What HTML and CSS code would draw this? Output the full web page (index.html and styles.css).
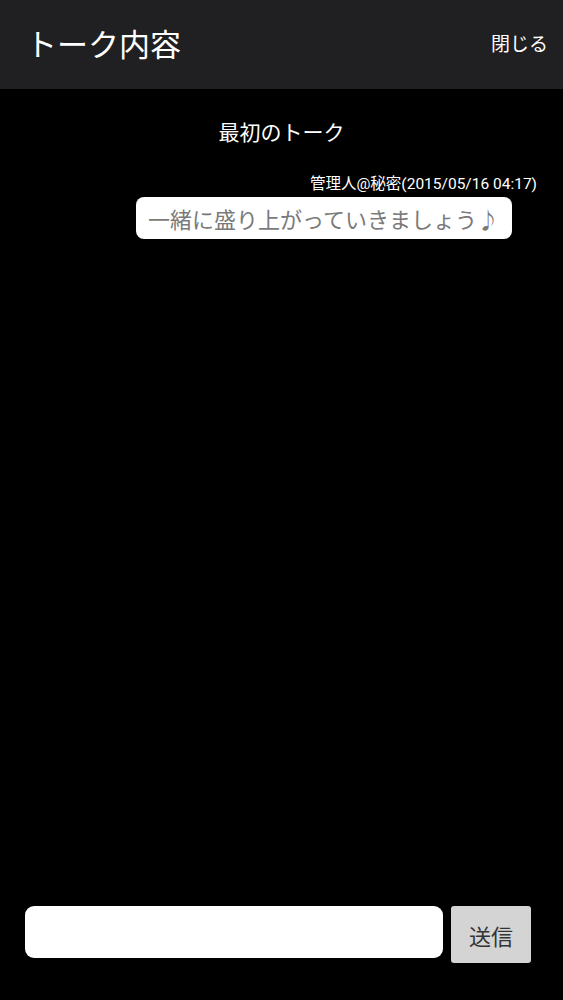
FILE: index.html
```html
<!DOCTYPE html>
<html lang="ja">
<head>
<meta charset="utf-8">
<title>トーク内容</title>
<link rel="stylesheet" href="styles.css">
</head>
<body>
<div class="app">
  <header class="topbar">
    <h1 class="title">トーク内容</h1>
    <span class="close">閉じる</span>
  </header>
  <main class="talk">
    <h2 class="talk-title">最初のトーク</h2>
    <div class="message">
      <div class="meta">管理人@秘密(2015/05/16 04:17)</div>
      <div class="bubble">一緒に盛り上がっていきましょう♪</div>
    </div>
  </main>
  <footer class="composer">
    <div class="input"></div>
    <button class="send">送信</button>
  </footer>
</div>
</body>
</html>
```
FILE: styles.css
```css
* { box-sizing: border-box; }
html, body { margin: 0; padding: 0; background: #000; }
body {
  font-family: "Noto Sans CJK JP", "Noto Sans", sans-serif;
  color: #fff;
}
.app {
  width: 563px;
  height: 1000px;
  display: flex;
  flex-direction: column;
}
.topbar {
  height: 89px;
  background: #201f21;
  display: flex;
  align-items: center;
  justify-content: space-between;
  padding: 0 15px 4px 26px;
}
.title {
  margin: 0;
  font-size: 31px;
  font-weight: 400;
  letter-spacing: 0;
  line-height: 1;
}
.close {
  font-size: 19px;
  line-height: 1;
}
.talk {
  flex: 1;
  display: flex;
  flex-direction: column;
}
.talk-title {
  margin: 29px 0 0;
  text-align: center;
  font-size: 21px;
  font-weight: 400;
  line-height: 26px;
}
.message {
  display: flex;
  flex-direction: column;
  align-items: flex-end;
  padding-right: 25px;
  margin-top: 31px;
}
.meta {
  font-size: 15.5px;
  line-height: 19px;
  margin-right: 1px;
  font-family: "Roboto", "Noto Sans CJK JP", sans-serif;
}
.bubble {
  margin-top: 3px;
  margin-right: 26px;
  background: #fff;
  color: #7a7a7a;
  border-radius: 8px;
  font-size: 22px;
  line-height: 42px;
  height: 42px;
  padding: 0 13px 0 12px;
  white-space: nowrap;
}
.composer {
  display: flex;
  align-items: flex-start;
  padding: 0 0 37px 25px;
  gap: 8px;
}
.input {
  width: 418px;
  height: 52px;
  background: #fff;
  border-radius: 9px;
}
.send {
  width: 80px;
  height: 57px;
  background: #d4d4d4;
  border: none;
  border-radius: 3px;
  color: #333;
  font-family: "Noto Sans CJK JP", sans-serif;
  font-size: 22px;
  padding: 0;
}
```
